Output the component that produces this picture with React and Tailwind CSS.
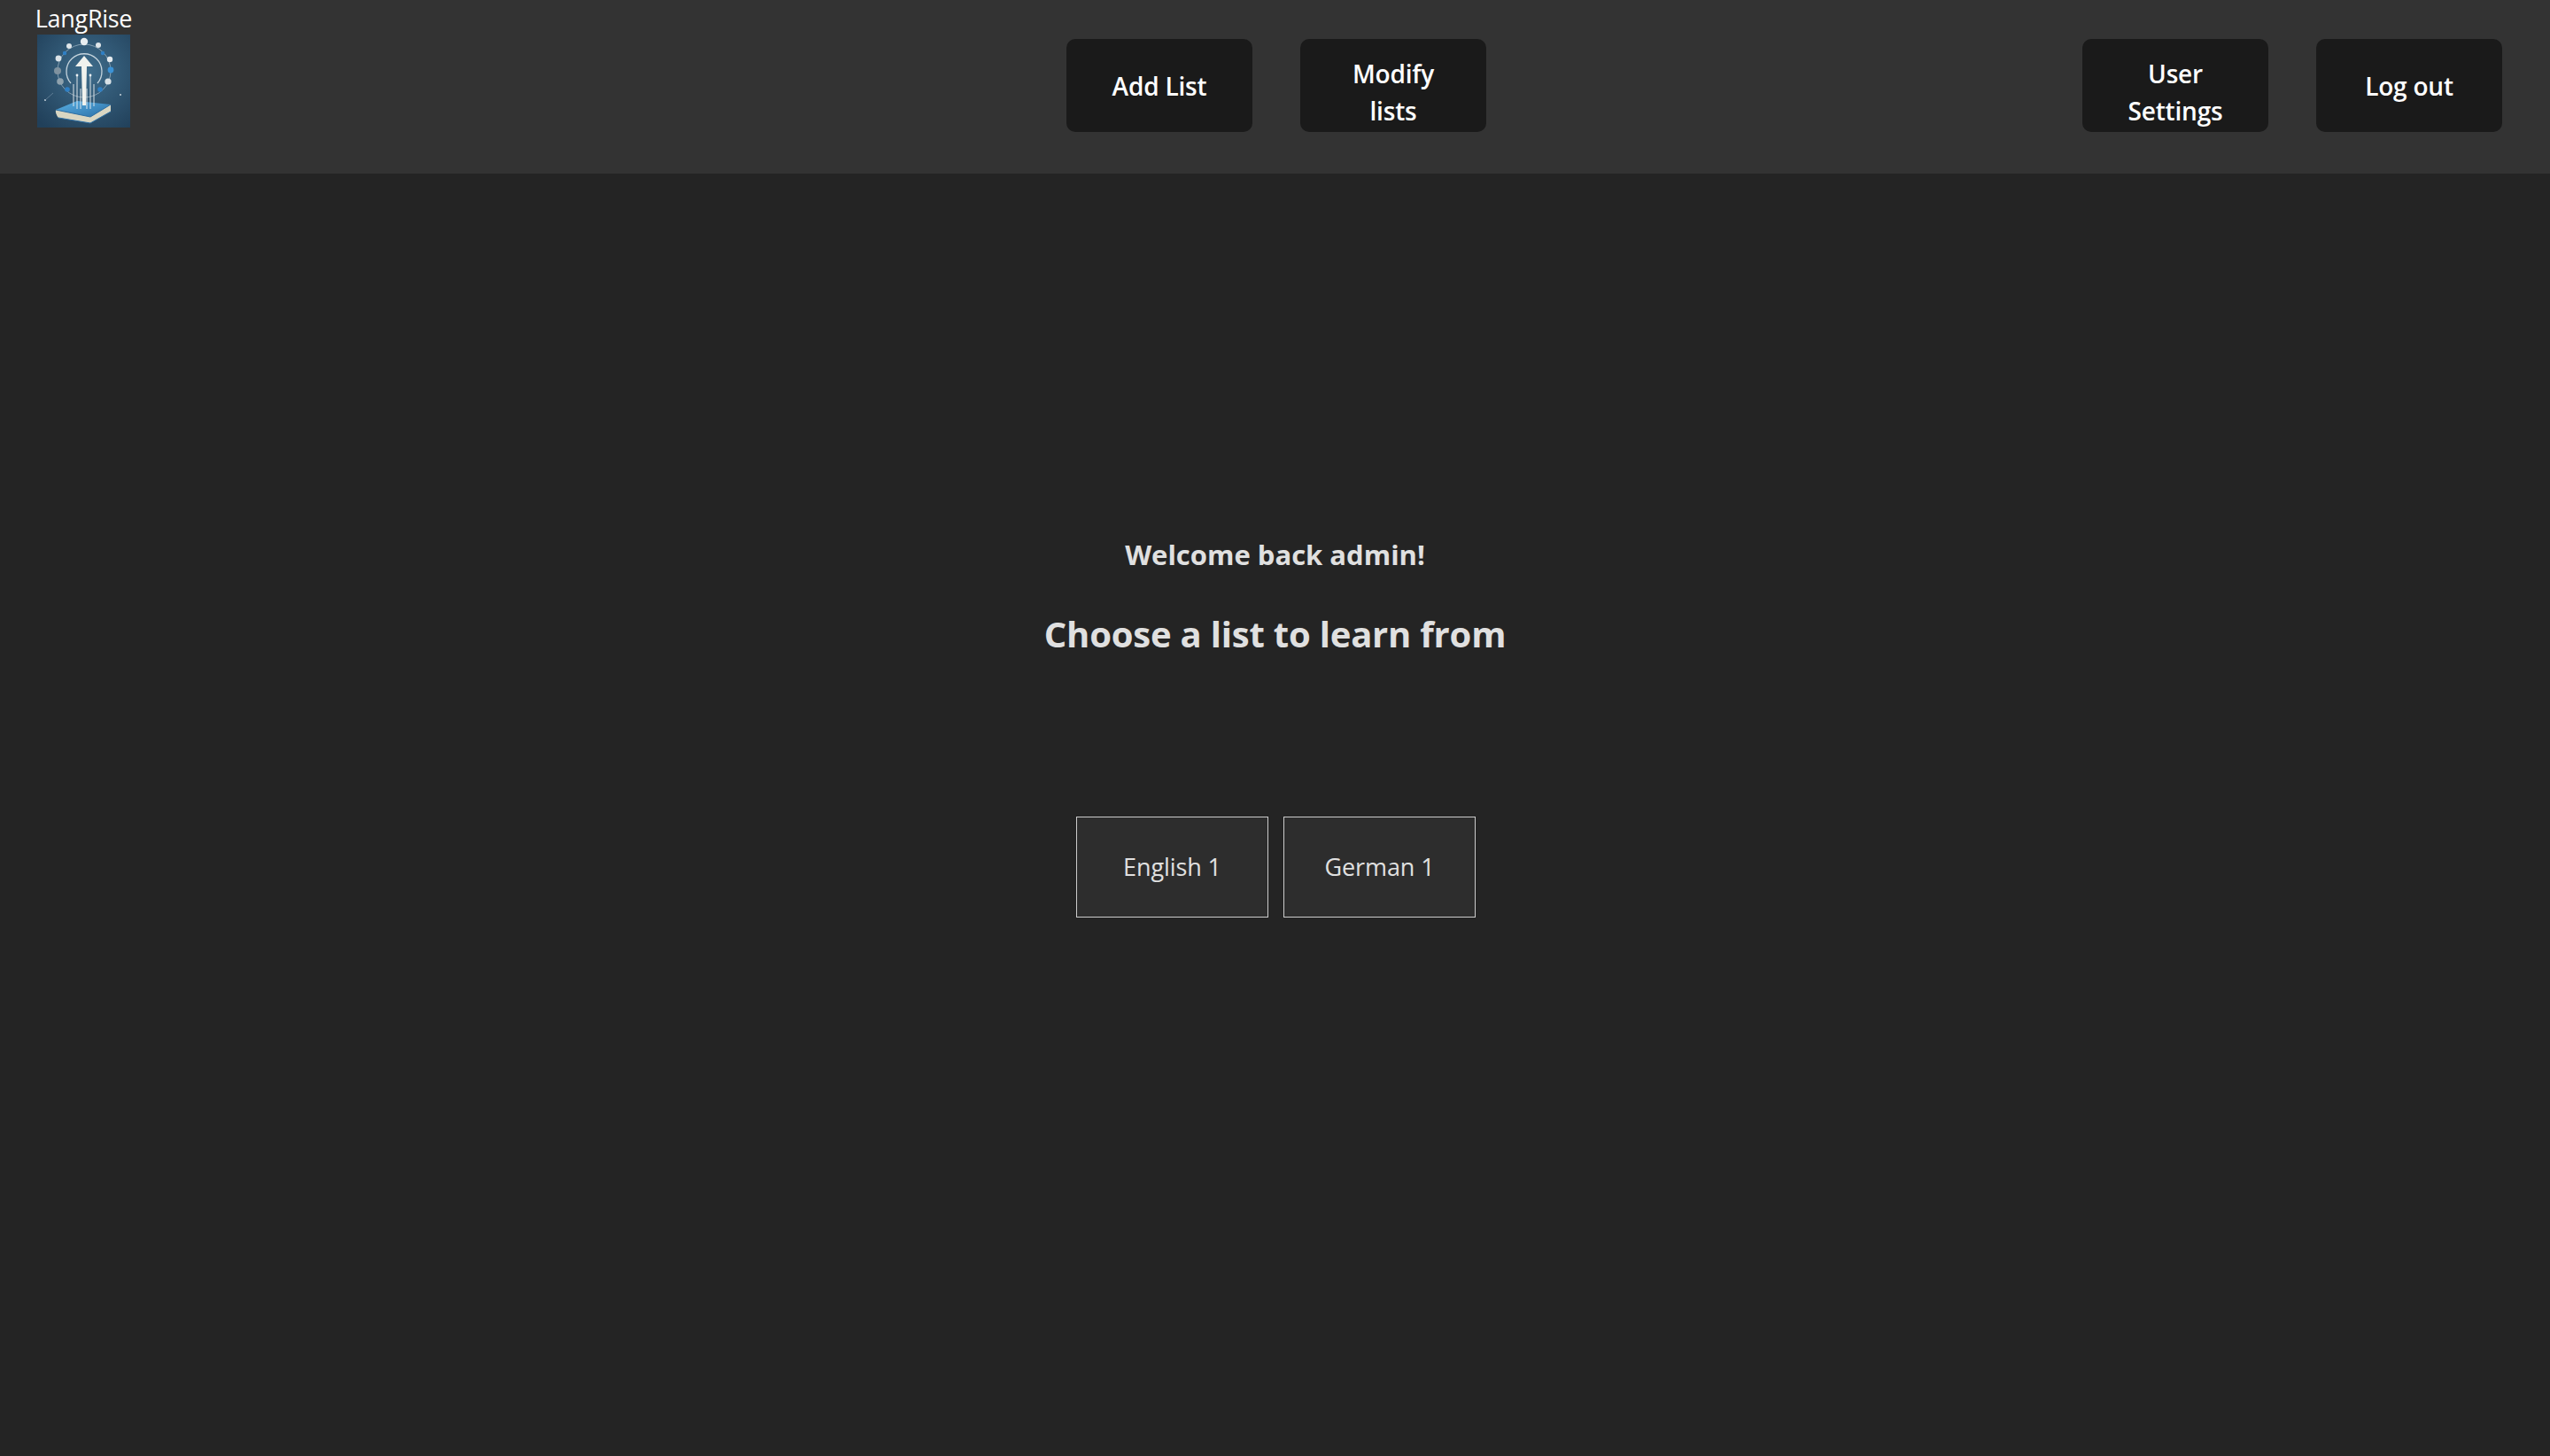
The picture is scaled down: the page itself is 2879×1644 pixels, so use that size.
const FONT = "font-['Open_Sans','Noto_Sans',sans-serif]";

const DOTS = [
  [53, 8, 4.2, "#e8edf0"],
  [36, 13, 3, "#dfe6ea"],
  [69, 12, 3, "#dfe6ea"],
  [31, 21, 2.2, "#2f7fc4"],
  [74, 21, 2.2, "#2f7fc4"],
  [24, 27, 3.4, "#dbe3e8"],
  [82, 28, 3.2, "#e4eaee"],
  [23, 41, 4, "#7f929f"],
  [83, 40, 3.4, "#3a92d6"],
  [26, 53, 3.8, "#8fa2ae"],
  [80, 53, 3.6, "#d8e1e6"],
  [34, 62, 2.8, "#2f7fc4"],
  [71, 62, 2.8, "#2f7fc4"],
];

function Logo() {
  return (
    <svg viewBox="0 0 105 105" className="w-[105px] h-[105px] block" aria-label="LangRise logo">
      <defs>
        <radialGradient id="logoBg" cx="55%" cy="40%" r="75%">
          <stop offset="0" stopColor="#3f6d8c" />
          <stop offset="1" stopColor="#21405a" />
        </radialGradient>
        <linearGradient id="bookTop" x1="0" y1="0" x2="1" y2="1">
          <stop offset="0" stopColor="#5ab0e4" />
          <stop offset="1" stopColor="#2a6fa6" />
        </linearGradient>
        <filter id="soft">
          <feGaussianBlur stdDeviation="0.35" />
        </filter>
      </defs>
      <rect width="105" height="105" fill="url(#logoBg)" />
      <g filter="url(#soft)">
        <circle cx="53" cy="41" r="30" fill="none" stroke="#9fb6c4" strokeWidth="1" opacity=".75" />
        <path d="M38 55 A20 20 0 1 1 68 55" fill="none" stroke="#c4d3dc" strokeWidth="1.3" />
        {DOTS.map(([x, y, r, c], i) => (
          <circle key={i} cx={x} cy={y} r={r} fill={c} />
        ))}
        <circle cx="94" cy="68" r="1" fill="#c5d2da" />
        <circle cx="9" cy="74" r="1" fill="#c5d2da" />
        <path d="M9 74 L18 66" stroke="#7f9bae" strokeWidth=".6" />
        <path d="M21 85 L45 75 L83 79 L60 93 Z" fill="url(#bookTop)" />
        <path d="M21 85 L60 93 L83 79 L83 87 L60 100 L24 94 Q20 89 21 85 Z" fill="#d9d6c2" />
        <path d="M21 85 L60 93 L83 79" fill="none" stroke="#2d6fa5" strokeWidth="1" />
        <path d="M24 94 L60 100 L83 87" fill="none" stroke="#2d6fa5" strokeWidth="1" />
        <path d="M43 36 L53 24 L63 36 L56 36 L55 80 L51 80 L50 36 Z" fill="#f0f2ee" />
        <g stroke="#eef2f3" strokeWidth=".9" fill="none">
          <path d="M41 81 V56" />
          <path d="M45 84 V46" />
          <path d="M49 84 V61" />
          <path d="M56 84 V61" />
          <path d="M60 84 V46" />
          <path d="M64 81 V56" />
        </g>
        <circle cx="45" cy="46" r="1.4" fill="#eef2f3" />
        <circle cx="60" cy="46" r="1.4" fill="#eef2f3" />
      </g>
    </svg>
  );
}

function NavButton({ wrapped, children }) {
  return (
    <button
      className={
        wrapped
          ? "w-[210px] h-[105px] px-[32px] pt-[14px] bg-[#1a1a1a] rounded-[10px] text-white text-[28px] leading-[42px] tracking-[-0.2px] font-semibold text-center"
          : "w-[210px] h-[105px] px-[32px] bg-[#1a1a1a] rounded-[10px] text-white text-[28px] leading-[42px] tracking-[-0.2px] font-semibold text-center"
      }
    >
      {children}
    </button>
  );
}

function ListButton({ children }) {
  return (
    <button className="w-[217px] h-[114px] bg-[#2d2d2d] border border-[#cccccc] text-[#e0e0e0] text-[27px] tracking-[-0.1px] text-center">
      {children}
    </button>
  );
}

export default function App() {
  return (
    <div className={`${FONT} min-h-screen flex flex-col bg-[#242424]`}>
      <header className="h-[196px] shrink-0 bg-[#333333] flex items-start">
        <div className="w-[188px] pl-[42px] flex flex-col items-start">
          <span className="w-[105px] h-[39px] pt-[1px] flex justify-center text-white text-[27px] leading-[39px] tracking-[-0.3px] whitespace-nowrap">
            LangRise
          </span>
          <Logo />
        </div>
        <div className="flex-1 flex pt-[44px] pl-[1016px] gap-[54px]">
          <NavButton>Add List</NavButton>
          <NavButton wrapped>Modify lists</NavButton>
        </div>
        <div className="flex pt-[44px] pr-[54px] gap-[54px]">
          <NavButton wrapped>User Settings</NavButton>
          <NavButton>Log out</NavButton>
        </div>
      </header>
      <main className="flex-1 flex flex-col items-center pt-[408px]">
        <h2 className="text-[#e0e0e0] text-[31px] leading-[44px] font-bold">Welcome back admin!</h2>
        <h1 className="mt-[41px] text-[#e0e0e0] text-[40px] leading-[54px] tracking-[-0.2px] font-bold">Choose a list to learn from</h1>
        <div className="mt-[179px] ml-[2px] flex gap-[17px]">
          <ListButton>English 1</ListButton>
          <ListButton>German 1</ListButton>
        </div>
      </main>
    </div>
  );
}
